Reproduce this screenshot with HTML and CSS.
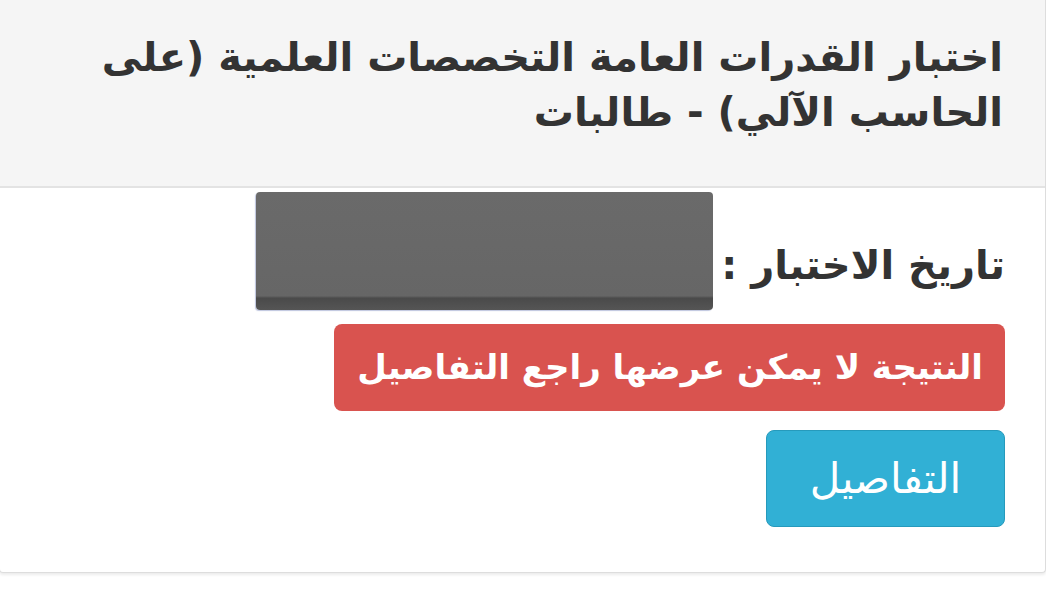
FILE: index.html
```html
<!DOCTYPE html>
<html lang="ar" dir="rtl">
<head>
<meta charset="utf-8">
<link rel="stylesheet" href="styles.css">
</head>
<body>
<div class="panel">
  <div class="panel-heading">
    <h3 class="panel-title">اختبار القدرات العامة التخصصات العلمية (على الحاسب الآلي) - طالبات</h3>
  </div>
  <div class="panel-body">
    <div class="date-row">
      <span class="date-label">تاريخ الاختبار :</span>
      <div class="redacted"></div>
    </div>
    <div class="alert">النتيجة لا يمكن عرضها راجع التفاصيل</div>
    <div class="actions">
      <a class="btn-info">التفاصيل</a>
    </div>
  </div>
</div>
</body>
</html>
```
FILE: styles.css
```css
html, body {
  margin: 0;
  padding: 0;
  background: #ffffff;
}
body {
  font-family: "DejaVu Sans", "Noto Sans", sans-serif;
  color: #333333;
  width: 1046px;
  height: 593px;
  overflow: hidden;
}
.panel {
  margin-left: -2px;
  width: 1045px;
  border: 1px solid #dddddd;
  border-top: none;
  border-radius: 0 0 4px 4px;
  box-shadow: 0 2px 3px rgba(0,0,0,0.08);
  background: #ffffff;
}
.panel-heading {
  background: #f5f5f5;
  border-bottom: 2px solid #e3e3e3;
  padding: 30px 42px 46px 40px;
  height: 110px;
}
.panel-title {
  margin: 0;
  font-size: 40px;
  line-height: 55px;
  font-weight: bold;
  color: #333333;
}
.panel-body {
  padding: 4px 40px 45px 40px;
}
.date-row {
  display: flex;
  align-items: center;
  gap: 8px;
}
.date-label {
  font-size: 40px;
  font-weight: bold;
  color: #333;
  padding-top: 28px;
}
.redacted {
  width: 457px;
  height: 118px;
  border-radius: 4px;
  background: linear-gradient(to bottom, #6a6a6a 0%, #666666 88%, #4a4a4a 90%, #555555 100%);
  box-shadow: -1px 1px 1px rgba(70, 90, 160, 0.35);
}
.alert {
  margin-top: 14px;
  background: #d9534f;
  color: #ffffff;
  border-radius: 8px;
  height: 87px;
  line-height: 87px;
  font-size: 34px;
  font-weight: bold;
  padding: 0 22px;
  width: 627px;
  white-space: nowrap;
}
.actions {
  margin-top: 19px;
  display: flex;
}
.btn-info {
  display: block;
  width: 237px;
  height: 95px;
  line-height: 95px;
  text-align: center;
  background: #31b0d5;
  border: 1px solid #269abc;
  border-radius: 8px;
  color: #ffffff;
  font-size: 42px;
}
```
